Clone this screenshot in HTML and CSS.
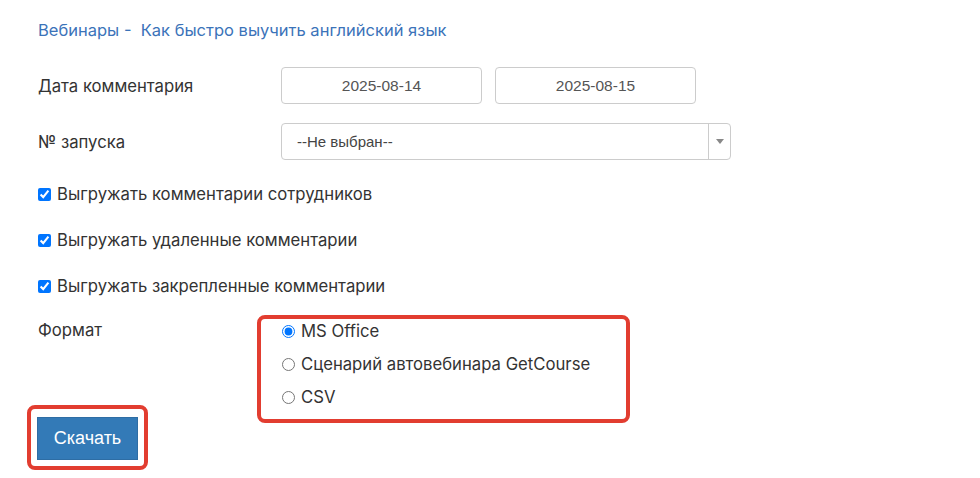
FILE: index.html
```html
<!DOCTYPE html>
<html lang="ru">
<head>
<meta charset="utf-8">
<title>Выгрузка комментариев</title>
<link rel="stylesheet" href="styles.css">
</head>
<body>
<div class="page">
  <div class="crumbs"><a href="#">Вебинары</a> - &nbsp;<a href="#">Как быстро выучить английский язык</a></div>

  <div class="row row-date">
    <div class="label">Дата комментария</div>
    <div class="dates">
      <input class="field date" type="text" value="2025-08-14">
      <input class="field date" type="text" value="2025-08-15">
    </div>
  </div>

  <div class="row row-select">
    <div class="label">№ запуска</div>
    <div class="select">
      <span class="select-text">--Не выбран--</span>
      <span class="select-arrow"><svg width="8" height="5" viewBox="0 0 8 5"><path d="M0 0h8L4 5z" fill="#888"/></svg></span>
    </div>
  </div>

  <div class="checks">
    <label class="check"><input type="checkbox" checked> Выгружать комментарии сотрудников</label>
    <label class="check"><input type="checkbox" checked> Выгружать удаленные комментарии</label>
    <label class="check"><input type="checkbox" checked> Выгружать закрепленные комментарии</label>
  </div>

  <div class="row row-format">
    <div class="label label-format">Формат</div>
    <div class="radios highlight-radios">
      <label class="radio"><input type="radio" name="fmt" checked> MS Office</label>
      <label class="radio"><input type="radio" name="fmt"> Сценарий автовебинара GetCourse</label>
      <label class="radio"><input type="radio" name="fmt"> CSV</label>
    </div>
  </div>

  <div class="actions">
    <span class="btn-wrap highlight-btn"><button class="btn" type="button">Скачать</button></span>
  </div>
</div>
</body>
</html>
```

FILE: styles.css
```css
*, *::before, *::after { box-sizing: border-box; }
html, body { margin: 0; background: #fff; }
body {
  font-family: Inter, "Noto Sans", "Liberation Sans", sans-serif;
  color: #333;
  font-size: 16.7px;
}
.page {
  padding: 20px 0 20px 38px;
}
.crumbs {
  height: 20px;
  line-height: 20px;
  font-size: 16.5px;
  color: #3b73b9;
}
.crumbs a { color: #3b73b9; text-decoration: none; }

.row {
  display: flex;
  align-items: center;
}
.label {
  width: 243px;
  flex: none;
  line-height: 20px;
}
.row-date { margin-top: 27px; }
.dates { display: flex; gap: 13px; }
.field {
  height: 37px;
  border: 1px solid #ccc;
  border-radius: 4px;
  background: #fff;
  font-family: "Liberation Sans", Arial, sans-serif;
  color: #555;
}
.date {
  width: 201px;
  text-align: center;
  font-size: 15.5px;
  padding: 0;
}
.row-select { margin-top: 19px; }
.select {
  width: 450px;
  height: 37px;
  border: 1px solid #ccc;
  border-radius: 4px;
  display: flex;
  align-items: center;
  font-family: "Liberation Sans", Arial, sans-serif;
  font-size: 15px;
  color: #444;
}
.select-text { flex: 1; padding-left: 15px; }
.select-arrow {
  width: 22px;
  height: 100%;
  border-left: 1px solid #ccc;
  display: flex;
  align-items: center;
  justify-content: center;
}

.checks {
  margin-top: 24px;
  display: flex;
  flex-direction: column;
  gap: 26px;
}
.check {
  display: flex;
  align-items: center;
  gap: 6px;
  line-height: 20px;
  height: 20px;
}
.check input {
  margin: 0;
  width: 13px;
  height: 13px;
}

.row-format {
  margin-top: 23px;
  align-items: flex-start;
}
.label-format { padding-top: 1px; }
.radios {
  display: flex;
  flex-direction: column;
  gap: 9px;
  position: relative;
}
.radio {
  display: flex;
  align-items: center;
  gap: 6px;
  height: 24px;
  line-height: 24px;
}
.radio input {
  margin: 0 0 0 1px;
  width: 13px;
  height: 13px;
}
.highlight-radios::before {
  content: "";
  position: absolute;
  left: -24px;
  top: -4px;
  width: 373px;
  height: 108px;
  border: 4px solid #e23d30;
  border-radius: 8px;
  pointer-events: none;
}

.actions {
  margin-top: 8px;
  height: 43px;
}
.btn-wrap {
  position: relative;
  display: inline-block;
  margin-left: -1px;
}
.btn {
  display: block;
  width: 101px;
  height: 43px;
  background: #337ab7;
  border: 1px solid #2e6da4;
  border-radius: 0;
  color: #fff;
  font-family: "Liberation Sans", Arial, sans-serif;
  font-size: 18px;
  padding: 0;
}
.highlight-btn::before {
  content: "";
  position: absolute;
  left: -10px;
  top: -12px;
  width: 121px;
  height: 65px;
  border: 4px solid #e23d30;
  border-radius: 8px;
  pointer-events: none;
}
```
